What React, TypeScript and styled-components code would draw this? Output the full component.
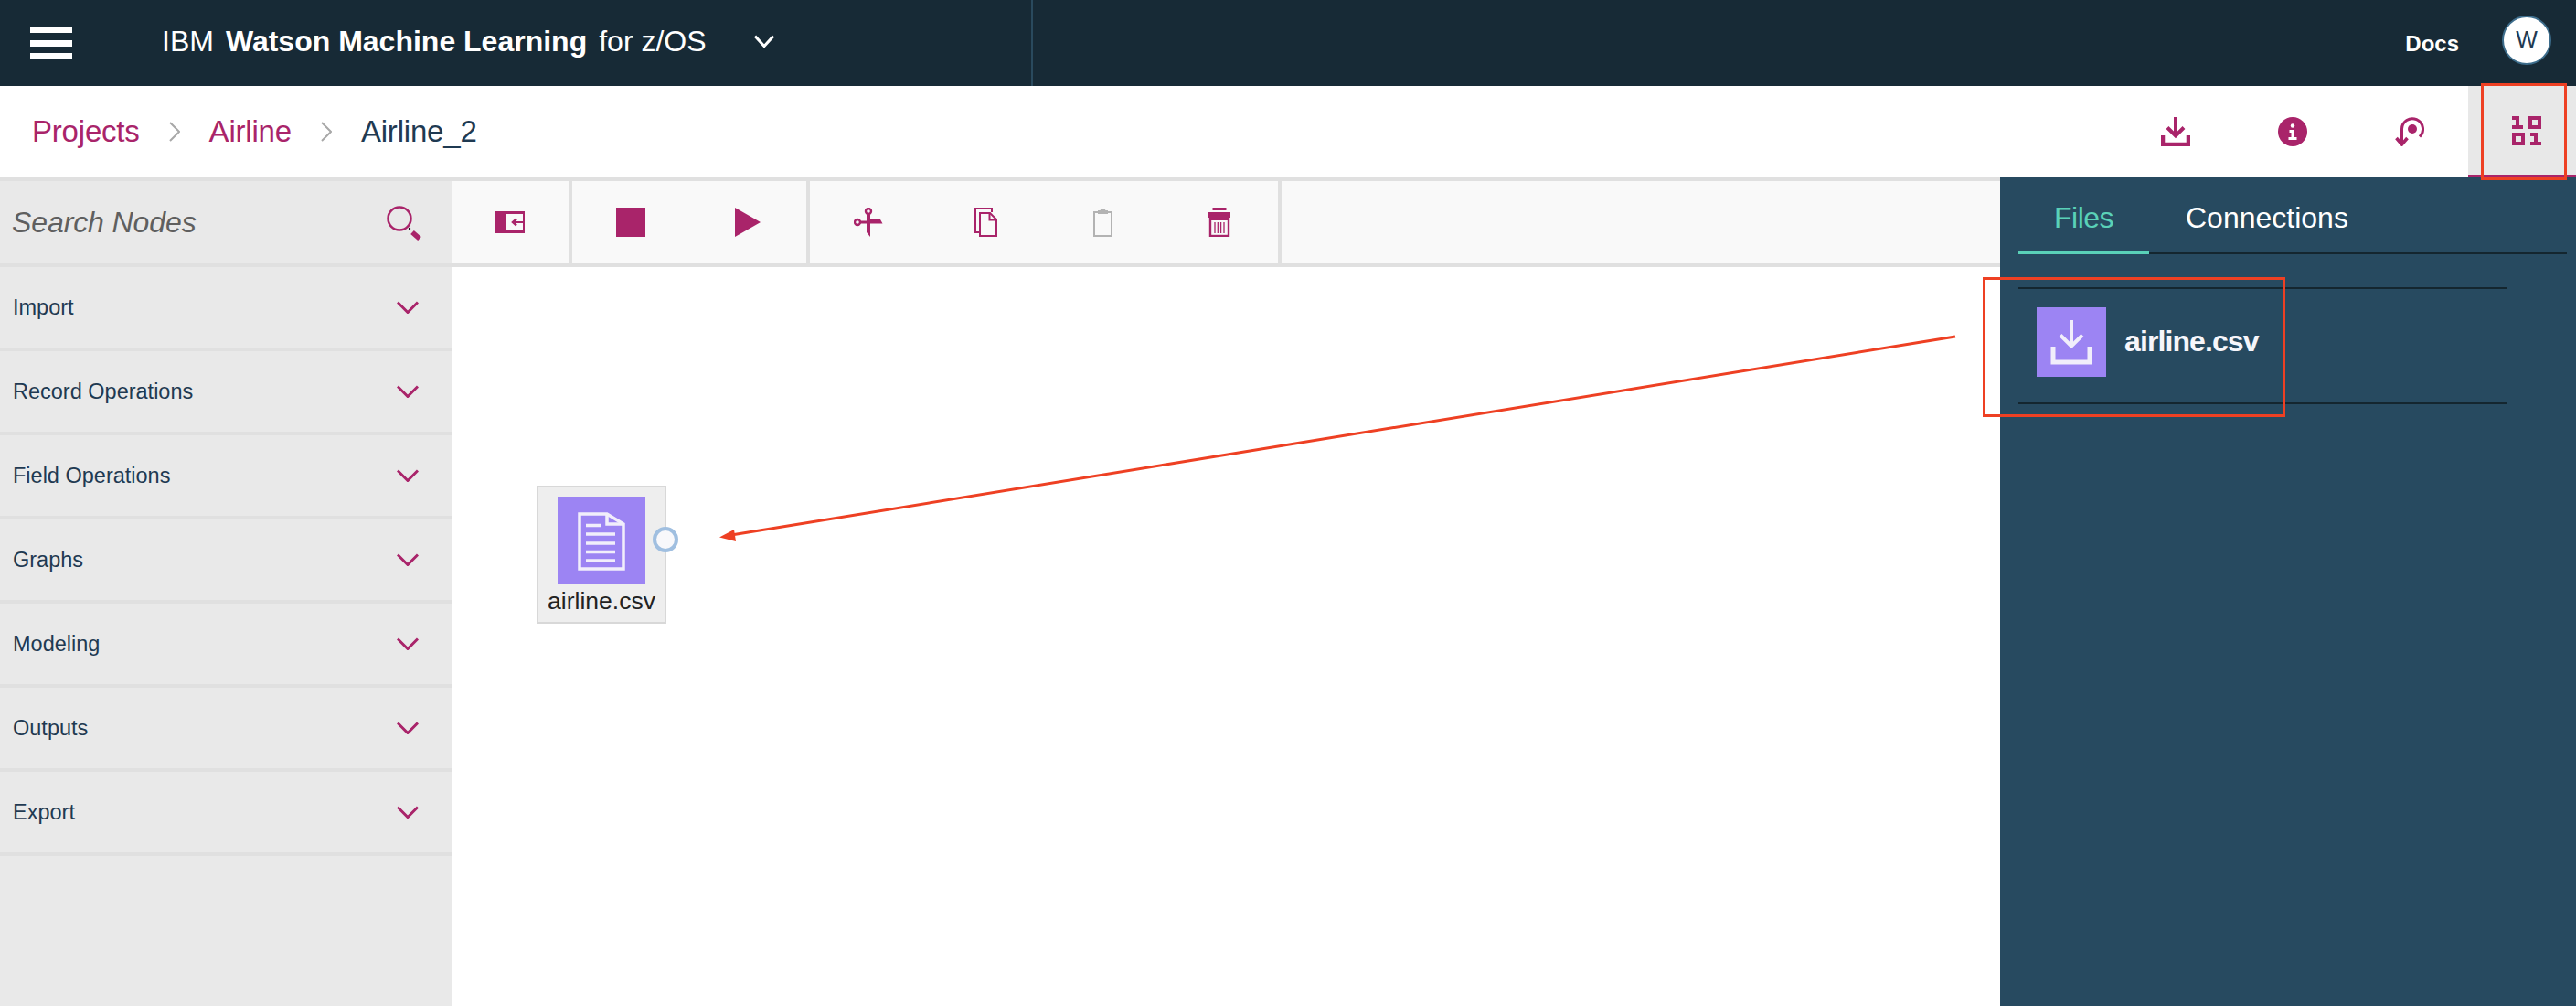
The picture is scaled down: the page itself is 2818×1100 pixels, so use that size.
import React from 'react';
import styled, { createGlobalStyle } from 'styled-components';

const MAGENTA = '#a9246a';
const INK = '#1f3a52';
const RULE = '#e0e0e0';
const RED = '#ee4023';
const PURPLE = '#9c84f3';

const Global = createGlobalStyle`
  html, body { margin: 0; padding: 0; background: #fff; }
  body { font-family: "Liberation Sans", Arial, sans-serif; }
  * { box-sizing: border-box; }
`;

const Page = styled.div`
  position: relative;
  width: 2818px;
  height: 1100px;
  overflow: hidden;
  display: flex;
  flex-direction: column;
`;

/* Top bar */
const TopBar = styled.header`
  height: 94px;
  flex: none;
  background: #172a36;
  display: flex;
  align-items: center;
  color: #fff;
  padding-left: 33px;
`;
const Burger = styled.div`
  width: 46px;
  height: 36px;
  display: flex;
  flex-direction: column;
  justify-content: space-between;
  margin-right: 98px;
  & > i { display: block; height: 7px; background: #fff; }
`;
const Brand = styled.div`
  width: 953px;
  height: 94px;
  flex: none;
  border-right: 2px solid #2a4a5e;
  display: flex;
  align-items: center;
  font-size: 32px;
  white-space: nowrap;
  padding-bottom: 4px;
  & > b { font-weight: 700; margin: 0 13px; }
  & > svg { margin-left: 52px; }
`;
const TopRight = styled.div`
  margin-left: auto;
  display: flex;
  align-items: center;
  padding-right: 27px;
`;
const Docs = styled.span`
  font-size: 24px;
  font-weight: 700;
  margin-right: 47px;
  padding-top: 2px;
`;
const Avatar = styled.div`
  width: 54px;
  height: 54px;
  margin-bottom: 7px;
  border-radius: 50%;
  background: #fff;
  border: 2px solid #3d6d8c;
  color: ${INK};
  font-size: 25px;
  display: flex;
  align-items: center;
  justify-content: center;
`;

/* Breadcrumb row */
const SubBar = styled.div`
  height: 100px;
  flex: none;
  background: #fff;
  display: flex;
  align-items: center;
  padding-left: 35px;
`;
const Crumbs = styled.nav`
  display: flex;
  align-items: center;
  font-size: 33px;
  letter-spacing: -0.2px;
`;
const CrumbLink = styled.span`
  color: ${MAGENTA};
`;
const CrumbNow = styled.span`
  color: ${INK};
`;
const CrumbSep = styled.svg`
  width: 12px;
  height: 22px;
  margin: 0 32px;
`;
const Actions = styled.div`
  margin-left: auto;
  display: flex;
  height: 100px;
`;
const ActionCell = styled.div<{ $active?: boolean }>`
  width: ${p => (p.$active ? '118px' : '128px')};
  height: 100px;
  display: flex;
  align-items: flex-start;
  justify-content: ${p => (p.$active ? 'flex-start' : 'center')};
  padding-top: ${p => (p.$active ? '33px' : '34px')};
  padding-left: ${p => (p.$active ? '48px' : '0')};
  background: ${p => (p.$active ? '#e8e8e8' : 'transparent')};
  border-bottom: ${p => (p.$active ? `3px solid ${MAGENTA}` : '0')};
`;

/* Body */
const Body = styled.div`
  flex: 1;
  display: flex;
  min-height: 0;
`;
const Sidebar = styled.aside`
  width: 494px;
  flex: none;
  background: #e9e9e9;
  border-top: 4px solid ${RULE};
`;
const SearchBox = styled.div`
  height: 94px;
  border-bottom: 4px solid ${RULE};
  display: flex;
  align-items: center;
  justify-content: space-between;
  padding: 0 33px 0 13px;
  font-size: 32px;
  font-style: italic;
  letter-spacing: -0.1px;
  color: #5f5f5f;
  & > svg { margin-top: 2px; }
`;
const Row = styled.div`
  height: 92px;
  border-bottom: 4px solid ${RULE};
  display: flex;
  align-items: center;
  justify-content: space-between;
  padding: 0 36px 0 14px;
  font-size: 23.5px;
  color: ${INK};
`;

const Main = styled.main`
  flex: 1;
  min-width: 0;
  display: flex;
  flex-direction: column;
  position: relative;
`;
const Toolbar = styled.div`
  height: 98px;
  flex: none;
  display: flex;
  background: #f9f9f9;
  border-top: 4px solid ${RULE};
  border-bottom: 4px solid ${RULE};
`;
const ToolGroup = styled.div`
  display: flex;
  border-right: 4px solid ${RULE};
`;
const Tool = styled.div`
  width: 128px;
  display: flex;
  align-items: center;
  justify-content: center;
`;
const Canvas = styled.div`
  flex: 1;
  position: relative;
  background: #fff;
`;

/* Canvas node */
const Node = styled.div`
  position: absolute;
  left: 93px;
  top: 239px;
  width: 142px;
  height: 151px;
  background: #eee;
  border: 2px solid #d8d8d8;
  display: flex;
  flex-direction: column;
  align-items: center;
  padding-top: 10px;
`;
const NodeIcon = styled.div`
  width: 96px;
  height: 96px;
  flex: none;
  background: ${PURPLE};
`;
const NodeLabel = styled.div`
  margin-top: 2px;
  font-size: 26.5px;
  line-height: 32px;
  color: #222;
`;
const Port = styled.div`
  position: absolute;
  right: -15px;
  top: 43px;
  width: 28px;
  height: 28px;
  border-radius: 50%;
  background: #f8f8fb;
  border: 4px solid #a0bfe0;
`;

/* Right panel */
const Panel = styled.aside`
  width: 630px;
  flex: none;
  background: #274a60;
  padding: 0 10px 0 20px;
  color: #fff;
`;
const Tabs = styled.div`
  height: 84px;
  display: flex;
  border-bottom: 2px solid #14262f;
`;
const Tab = styled.div<{ $active?: boolean }>`
  height: 84px;
  flex: none;
  width: ${p => (p.$active ? '143px' : 'auto')};
  padding-left: ${p => (p.$active ? '0' : '40px')};
  padding-top: 24px;
  text-align: ${p => (p.$active ? 'center' : 'left')};
  font-size: 32px;
  line-height: 40px;
  letter-spacing: ${p => (p.$active ? '-0.5px' : '0')};
  color: ${p => (p.$active ? '#5ad1b8' : '#fff')};
  border-bottom: ${p => (p.$active ? '4px solid #5ad1b8' : '0')};
`;
const FileRow = styled.div`
  width: 535px;
  height: 128px;
  margin-top: 36px;
  border-top: 2px solid #14262f;
  border-bottom: 2px solid #14262f;
  padding: 20px 0 0 20px;
  display: flex;
  align-items: flex-start;
  gap: 20px;
`;
const FileIcon = styled.div`
  width: 76px;
  height: 76px;
  flex: none;
  background: ${PURPLE};
`;
const FileName = styled.div`
  font-size: 32px;
  font-weight: 700;
  letter-spacing: -0.9px;
  line-height: 74px;
  color: #f6f6fb;
`;

/* Red annotations lying over the page */
const Callout = styled.div<{ $x: number; $y: number; $w: number; $h: number }>`
  position: absolute;
  left: ${p => p.$x}px;
  top: ${p => p.$y}px;
  width: ${p => p.$w}px;
  height: ${p => p.$h}px;
  border: 3px solid ${RED};
  pointer-events: none;
`;
const ArrowLayer = styled.svg`
  position: absolute;
  left: 0;
  top: 0;
  pointer-events: none;
`;

const Chevron = ({ w = 24, h = 14, color = MAGENTA, sw = 3 }: { w?: number; h?: number; color?: string; sw?: number }) => (
  <svg width={w} height={h} viewBox={`0 0 ${w} ${h}`} fill="none">
    <path d={`M1 1.5 L${w / 2} ${h - 1.5} L${w - 1} 1.5`} stroke={color} strokeWidth={sw} />
  </svg>
);

const DownloadIcon = () => (
  <svg width="32" height="32" viewBox="0 0 32 32" fill="none" stroke={MAGENTA}>
    <path d="M16 0V20" strokeWidth="4" />
    <path d="M7 11.500L16 20.500L25 11.500" strokeWidth="4" />
    <path d="M2 20V30H30V20" strokeWidth="4.500" />
  </svg>
);
const InfoIcon = () => (
  <svg width="32" height="32" viewBox="0 0 32 32">
    <circle cx="16" cy="16" r="16" fill={MAGENTA} />
    <circle cx="16" cy="9.500" r="2.200" fill="#fff" />
    <path d="M12.500 14H18V22H20.500V25H11.500V22H14.500V17H12.500Z" fill="#fff" />
  </svg>
);
const HistoryIcon = () => (
  <svg width="32" height="32" viewBox="0 0 32 32" fill="none" stroke={MAGENTA}>
    <circle cx="19" cy="13" r="5" fill={MAGENTA} stroke="none" />
    <path d="M27 21.500A11.500 11.500 0 1 0 7.500 13V29" strokeWidth="3" />
    <path d="M1.500 23L7.500 30L13.500 23" strokeWidth="3.500" />
  </svg>
);
const BinaryIcon = () => (
  <svg width="32" height="32" viewBox="0 0 32 32" fill={MAGENTA}>
    <path d="M0 0H8V10H12V14H0V10H4V4H0Z" />
    <path d="M18 0H32V14H18ZM22 4V10H28V4Z" fillRule="evenodd" />
    <path d="M0 18H14V32H0ZM4 22V28H10V22Z" fillRule="evenodd" />
    <path d="M20 18H28V28H32V32H20V28H24V22H20Z" />
  </svg>
);

const TogglePanelIcon = () => (
  <svg width="32" height="24" viewBox="0 0 32 24">
    <path d="M0 0H32V24H0ZM11 3V21H30V3Z" fill={MAGENTA} fillRule="evenodd" />
    <path d="M30 12H21" stroke={MAGENTA} strokeWidth="2" />
    <path d="M23 8.500L19 12L23 15.500" stroke={MAGENTA} strokeWidth="2.400" fill="none" />
  </svg>
);
const StopIcon = () => (
  <svg width="32" height="32" viewBox="0 0 32 32"><rect width="32" height="32" fill={MAGENTA} /></svg>
);
const PlayIcon = () => (
  <svg width="28" height="32" viewBox="0 0 28 32"><path d="M0 0L28 16L0 32Z" fill={MAGENTA} /></svg>
);
const ScissorsIcon = () => (
  <svg width="32" height="32" viewBox="0 0 32 32" fill="none">
    <circle cx="16" cy="4" r="3" stroke={MAGENTA} strokeWidth="2.400" />
    <circle cx="4" cy="16" r="3" stroke={MAGENTA} strokeWidth="2.400" />
    <path d="M14 7.500H18V32L14 27Z" fill={MAGENTA} />
    <path d="M7 14.500H18V13H29L31.500 17.500H7Z" fill={MAGENTA} />
  </svg>
);
const CopyIcon = () => (
  <svg width="25" height="32" viewBox="0 0 25 32" fill="none" stroke={MAGENTA}>
    <path d="M5 27H1V1H19V5" strokeWidth="2" />
    <path d="M6 6H17L24 13V31H6Z" strokeWidth="2" fill="#f9f9f9" />
    <path d="M16.500 5.500V13.500H24.500" strokeWidth="2" />
  </svg>
);
const ClipboardIcon = () => (
  <svg width="21" height="32" viewBox="0 0 21 32" fill="none" stroke="#b3b3b3">
    <rect x="1" y="5" width="19" height="26" strokeWidth="2" />
    <path d="M6 6H15V4H12.500A2 2 0 0 0 8.500 4H6Z" strokeWidth="2" fill="#b3b3b3" />
  </svg>
);
const TrashIcon = () => (
  <svg width="24" height="32" viewBox="0 0 24 32" fill="none">
    <rect x="4.500" y="0" width="15" height="3" fill={MAGENTA} />
    <rect x="0" y="5" width="24" height="6" fill={MAGENTA} />
    <rect x="2" y="10" width="20" height="21" stroke={MAGENTA} strokeWidth="2.400" />
    <rect x="2" y="10" width="20" height="4" fill={MAGENTA} />
    <path d="M7 16V28M10.300 16V28M13.600 16V28M17 16V28" stroke={MAGENTA} strokeWidth="1.300" />
  </svg>
);

const SearchIcon = () => (
  <svg width="38" height="38" viewBox="0 0 38 38" fill="none">
    <circle cx="14" cy="14" r="12.500" stroke={MAGENTA} strokeWidth="2.500" />
    <path d="M28 29L36 36" stroke={MAGENTA} strokeWidth="5.500" />
    <circle cx="25" cy="25" r="1.200" fill="#111" />
  </svg>
);

const DocGlyph = () => (
  <svg width="96" height="96" viewBox="0 0 96 96" fill="none" stroke="#f1eefb" strokeWidth="3.500">
    <path d="M24 19H54L72 30V79H24Z" />
    <path d="M54 19V30H72" />
    <path d="M31 31.500H47M31 41H63M31 51H63M31 60.500H63M31 70H63" />
  </svg>
);
const FileGlyph = () => (
  <svg width="76" height="76" viewBox="0 0 76 76" fill="none" stroke="#f1eefb" strokeWidth="4" style={{ display: 'block' }}>
    <path d="M38 14V43" />
    <path d="M26 30.500L38 42.500L50 30.500" />
    <path d="M18 43V60H58V43" strokeWidth="5" />
  </svg>
);

const categories = ['Import', 'Record Operations', 'Field Operations', 'Graphs', 'Modeling', 'Outputs', 'Export'];

export default function App() {
  return (
    <Page>
      <Global />
      <TopBar>
        <Burger><i /><i /><i /></Burger>
        <Brand>
          IBM<b>Watson Machine Learning</b>for z/OS
          <Chevron w={22} h={14} color="#fff" sw={3} />
        </Brand>
        <TopRight>
          <Docs>Docs</Docs>
          <Avatar>W</Avatar>
        </TopRight>
      </TopBar>
      <SubBar>
        <Crumbs>
          <CrumbLink>Projects</CrumbLink>
          <CrumbSep viewBox="0 0 12 22" fill="none"><path d="M1 1L11 11L1 21" stroke="#a8a8a8" strokeWidth="2" /></CrumbSep>
          <CrumbLink>Airline</CrumbLink>
          <CrumbSep viewBox="0 0 12 22" fill="none"><path d="M1 1L11 11L1 21" stroke="#a8a8a8" strokeWidth="2" /></CrumbSep>
          <CrumbNow>Airline_2</CrumbNow>
        </Crumbs>
        <Actions>
          <ActionCell><DownloadIcon /></ActionCell>
          <ActionCell><InfoIcon /></ActionCell>
          <ActionCell><HistoryIcon /></ActionCell>
          <ActionCell $active><BinaryIcon /></ActionCell>
        </Actions>
      </SubBar>
      <Body>
        <Sidebar>
          <SearchBox>Search Nodes<SearchIcon /></SearchBox>
          {categories.map(c => (
            <Row key={c}>{c}<Chevron /></Row>
          ))}
        </Sidebar>
        <Main>
          <Toolbar>
            <ToolGroup><Tool><TogglePanelIcon /></Tool></ToolGroup>
            <ToolGroup><Tool><StopIcon /></Tool><Tool><PlayIcon /></Tool></ToolGroup>
            <ToolGroup>
              <Tool><ScissorsIcon /></Tool>
              <Tool><CopyIcon /></Tool>
              <Tool><ClipboardIcon /></Tool>
              <Tool><TrashIcon /></Tool>
            </ToolGroup>
          </Toolbar>
          <Canvas>
            <Node>
              <NodeIcon><DocGlyph /></NodeIcon>
              <NodeLabel>airline.csv</NodeLabel>
              <Port />
            </Node>
          </Canvas>
        </Main>
        <Panel>
          <Tabs>
            <Tab $active>Files</Tab>
            <Tab>Connections</Tab>
          </Tabs>
          <FileRow>
            <FileIcon><FileGlyph /></FileIcon>
            <FileName>airline.csv</FileName>
          </FileRow>
        </Panel>
      </Body>
      <Callout $x={2714} $y={91} $w={94} $h={106} />
      <Callout $x={2169} $y={303} $w={331} $h={153} />
      <ArrowLayer width="2818" height="1100" viewBox="0 0 2818 1100" fill="none">
        <path d="M2139 368L800 585" stroke={RED} strokeWidth="3" />
        <path d="M787 587.500L803 579L805 592Z" fill={RED} />
      </ArrowLayer>
    </Page>
  );
}
